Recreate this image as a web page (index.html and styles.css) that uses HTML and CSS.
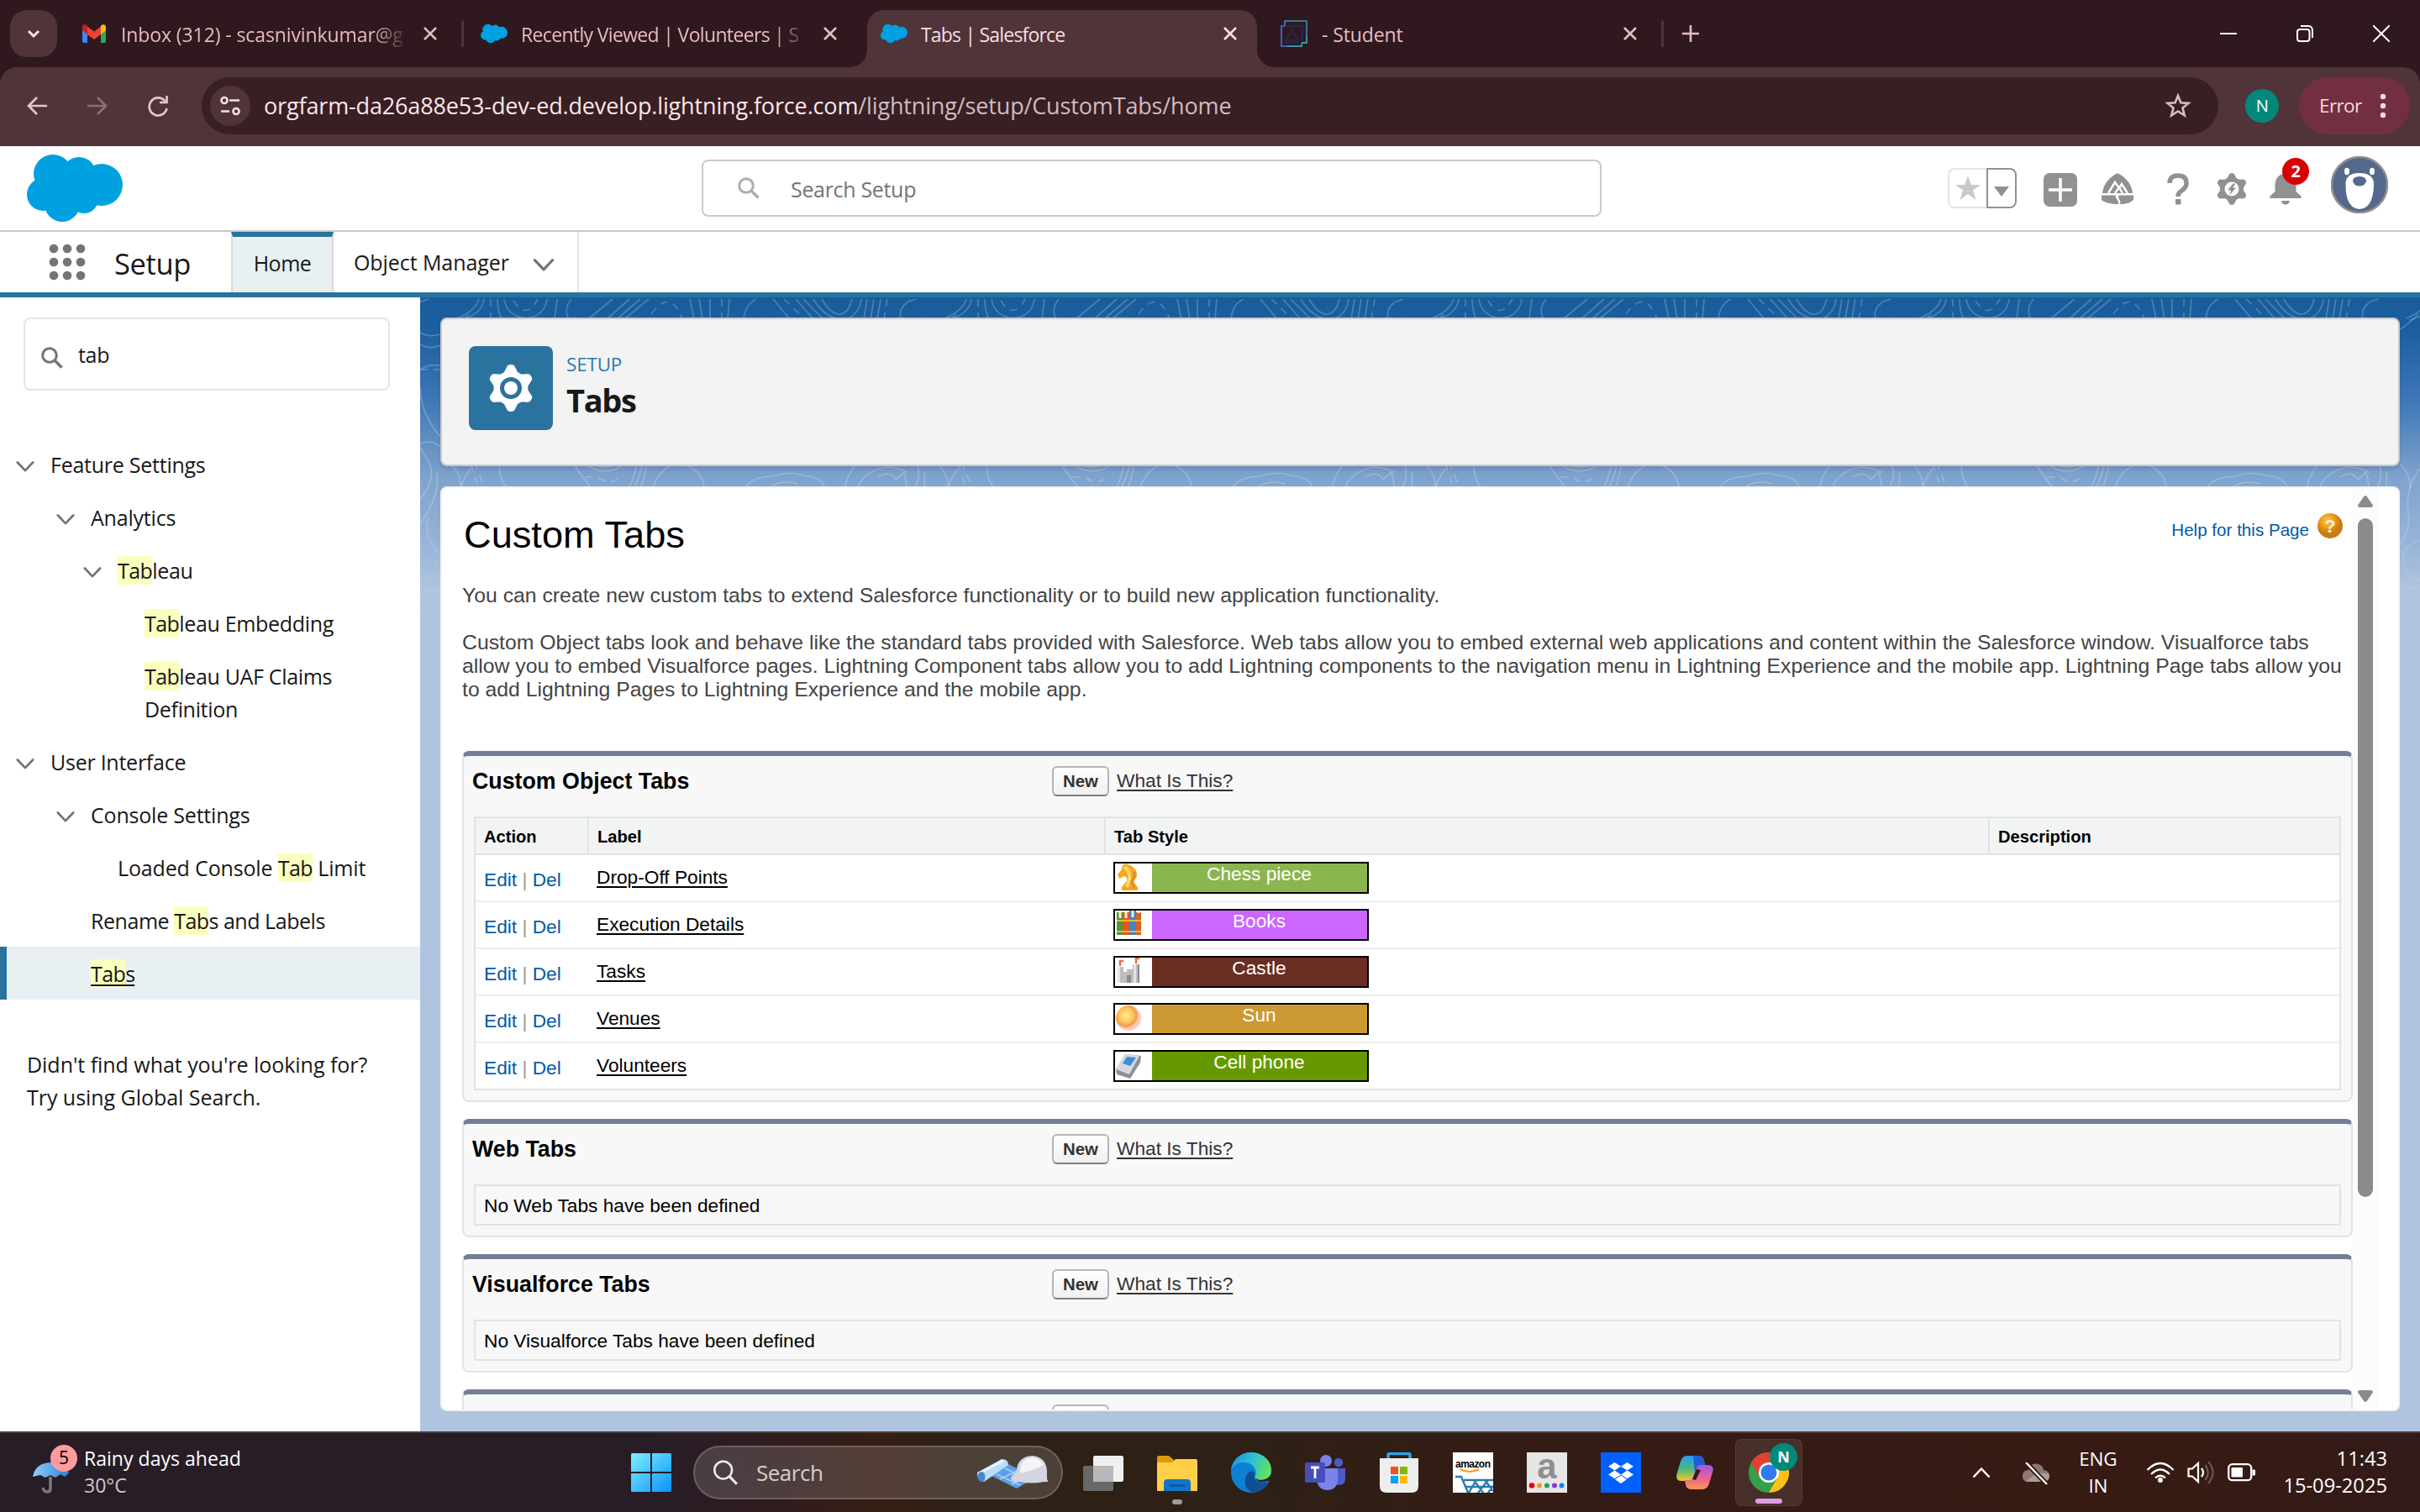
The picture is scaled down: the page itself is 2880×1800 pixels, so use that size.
FILE: index.html
```html
<!DOCTYPE html>
<html lang="en">
<head>
<meta charset="utf-8">
<title>Tabs | Salesforce</title>
<link rel="stylesheet" href="styles.css">
</head>
<body>
<svg class="defs" aria-hidden="true">
  <symbol id="cloud" viewBox="0 0 114 80">
    <g fill="#00a1e0"><ellipse cx="31" cy="23" rx="23" ry="23"/><circle cx="62" cy="23" r="20"/><circle cx="89" cy="36" r="25"/><circle cx="19.500" cy="47.500" r="19.500"/><circle cx="42" cy="59" r="21"/><circle cx="68" cy="53" r="17"/><rect x="25" y="22" width="60" height="32"/></g>
  </symbol>
  <symbol id="x" viewBox="0 0 16 16"><path d="M1 1 15 15M15 1 1 15" fill="none" stroke="currentColor" stroke-width="2.600"/></symbol>
  <symbol id="chev" viewBox="0 0 24 16"><path d="M2 2.500 12 13 22 2.500" fill="none" stroke="currentColor" stroke-width="3" stroke-linecap="round" stroke-linejoin="round"/></symbol>
  <symbol id="lens" viewBox="0 0 26 26"><circle cx="10" cy="10" r="8.300" fill="none" stroke="currentColor" stroke-width="3"/><path d="M16 16 24.500 24.500" stroke="currentColor" stroke-width="3.500"/></symbol>
  <symbol id="gear" viewBox="-28 -28 56 56">
    <g fill="currentColor"><circle r="20.500"/>
      <path d="M-9 -17 L-5 -25 Q-4 -28 0 -28 Q4 -28 5 -25 L9 -17 L9 17 L5 25 Q4 28 0 28 Q-4 28 -5 25 L-9 17Z"/>
      <path transform="rotate(60)" d="M-9 -17 L-5 -25 Q-4 -28 0 -28 Q4 -28 5 -25 L9 -17 L9 17 L5 25 Q4 28 0 28 Q-4 28 -5 25 L-9 17Z"/>
      <path transform="rotate(120)" d="M-9 -17 L-5 -25 Q-4 -28 0 -28 Q4 -28 5 -25 L9 -17 L9 17 L5 25 Q4 28 0 28 Q-4 28 -5 25 L-9 17Z"/>
    </g>
  </symbol>
</svg>

<header class="strip">
  <button class="tab-search"><svg width="18" height="12"><path d="M3 3 9 9 15 3" fill="none" stroke="#fbe4e6" stroke-width="3"/></svg></button>
  <div class="tab">
    <svg class="fav" viewBox="0 0 32 32"><path d="M2 8V25q0 2 2 2h4V13z" fill="#4285f4"/><path d="M30 8V25q0 2-2 2h-4V13z" fill="#34a853"/><path d="M24 6.500 26 5.500q4-1 4 3.500v3l-6 5z" fill="#fbbc04"/><path d="M8 17V7.500l8 6 8-6V17l-8 6z" fill="#ea4335"/><path d="M2 12V9q0-4.500 4-3.500L8 7v10z" fill="#c5221f"/></svg>
    <span class="tab-title fade">Inbox (312) - scasnivinkumar@g</span>
    <svg class="close"><use href="#x"/></svg><i class="sep"></i>
  </div>
  <div class="tab">
    <svg class="fav"><use href="#cloud"/></svg>
    <span class="tab-title fade tighter">Recently Viewed | Volunteers | S</span>
    <svg class="close"><use href="#x"/></svg>
  </div>
  <div class="tab active">
    <svg class="fav"><use href="#cloud"/></svg>
    <span class="tab-title tightest">Tabs | Salesforce</span>
    <svg class="close"><use href="#x"/></svg>
  </div>
  <div class="tab">
    <svg class="fav" viewBox="0 0 32 32" fill="none" stroke-width="2"><path d="M5 7V1H31V27H27" stroke="#3f7391"/><path d="M5 7H26V25" stroke="#1f2f66" stroke-width="1.500"/><path d="M5 7H1V31H25V27H31" stroke="#3c63b4"/><path d="M8 31H25V27H31V20" stroke="#3b9199"/><path d="M6 24 14 12l7 12z" stroke="#2b2545"/><rect x="5" y="25" width="20" height="3" fill="#1d2650" stroke="none"/></svg>
    <span class="tab-title student">- Student</span>
    <svg class="close"><use href="#x"/></svg><i class="sep"></i>
  </div>
  <svg class="plus" width="22" height="22"><path d="M11 1V21M1 11H21" stroke="#e6bcc3" stroke-width="2.600"/></svg>
  <div class="win-controls">
    <svg width="20" height="20"><path d="M0 10H20" stroke="#fff" stroke-width="2"/></svg>
    <svg width="20" height="20" fill="none" stroke="#fff" stroke-width="2"><rect x="1" y="5" width="14.500" height="14" rx="3"/><path d="M5 1H14Q19 1 19 7V15"/></svg>
    <svg width="20" height="20"><path d="M0 0 20 20M20 0 0 20" stroke="#fff" stroke-width="2"/></svg>
  </div>
</header>

<div class="toolbar-back"><div class="toolbar">
  <svg class="nav-back" width="24" height="24"><path d="M24 12H2M12 2 2 12 12 22" fill="none" stroke="#eac3c9" stroke-width="2.700"/></svg>
  <svg class="nav-fwd" width="24" height="24"><path d="M0 12H22M12 2 22 12 12 22" fill="none" stroke="#8f6d73" stroke-width="2.700"/></svg>
  <svg class="nav-reload" width="26" height="26"><path d="M21.500 7.500A10.500 10.500 0 1 0 23.500 16M23.500 1V9H15" fill="none" stroke="#eac3c9" stroke-width="2.700"/></svg>
  <div class="omnibox">
    <span class="site-info"><svg width="28" height="28" fill="none" stroke="#f3dfe1" stroke-width="2.600"><circle cx="7" cy="7.500" r="3.500"/><path d="M13 7.500H25M3 20.500H13"/><circle cx="21" cy="20.500" r="3.500"/></svg></span>
    <span class="url">orgfarm-da26a88e53-dev-ed.develop.lightning.force.com<span>/lightning/setup/CustomTabs/home</span></span>
    <svg class="bookmark" width="32" height="32" viewBox="0 0 32 32"><path d="M16 4 19.400 12.300 28.500 12.900 21.500 18.600 23.800 27.400 16 22.500 8.200 27.400 10.500 18.600 3.500 12.900 12.600 12.300Z" fill="none" stroke="#d3bfc2" stroke-width="2.600"/></svg>
  </div>
  <span class="profile">N</span>
  <div class="error-pill"><span>Error</span><svg width="8" height="30" fill="#ffd9df"><circle cx="4" cy="4" r="3.200"/><circle cx="4" cy="15" r="3.200"/><circle cx="4" cy="26" r="3.200"/></svg></div>
</div></div>

<div class="app-header">
  <svg class="logo"><use href="#cloud"/></svg>
  <div class="global-search"><svg width="26" height="26"><use href="#lens"/></svg><span>Search Setup</span></div>
  <div class="actions">
    <div class="fav-group">
      <span class="fav-star"><svg width="32" height="32" viewBox="0 0 32 32"><path d="M16 1 19.800 12H31L22 18.500 25.500 30 16 23 6.500 30 10 18.500 1 12H12.200Z" fill="#c9c9c9"/></svg></span>
      <span class="fav-drop"><svg width="18" height="12"><path d="M0 0H18L9 12Z" fill="#919191"/></svg></span>
    </div>
    <svg class="a-plus" width="40" height="40"><rect width="40" height="40" rx="7" fill="#919191"/><path d="M20 6V34M6 20H34" stroke="#fff" stroke-width="3.500"/></svg>
    <svg class="a-trail" width="38" height="38" viewBox="0 0 38 38"><path d="M19 0C27 4 36 12 37 24H1C2 12 11 4 19 0Z" fill="#919191"/><path d="M8 24 16 11 21 18 24 13 31 24M16 24l5-7 4 7" fill="none" stroke="#fff" stroke-width="2.400"/><path d="M0 26.500H17C15 30 21 31 20 37 12 37 3 35 0 32ZM21 26.500H38V32C35 35 29 37 22 37 24 32 18 30 21 26.500Z" fill="#919191"/></svg>
    <svg class="a-help" width="26" height="38" viewBox="0 0 26 38"><path d="M3 12Q3 3 13 3T23 12Q23 17 18 20.500 13 23.500 13 28" fill="none" stroke="#919191" stroke-width="5.500"/><rect x="10" y="31" width="6.500" height="6.500" rx="1" fill="#919191"/></svg>
    <svg class="a-gear" width="38" height="38" viewBox="-19 -19 38 38"><use href="#gear" x="-19" y="-19" width="38" height="38"/><circle r="8.500" fill="#fff"/><path d="M2 -7 -5 1.500H-1L-2.500 7 5 -1.500H1L4 -6Z" fill="#919191"/></svg>
    <div class="bell"><svg width="38" height="38" viewBox="0 0 38 38"><path d="M19 0Q31 2 31.500 14V22L37 27Q39 30 36 30H2Q-1 30 1 27L6.500 22V14Q7 2 19 0ZM14 33H24Q23 37.500 19 37.500T14 33Z" fill="#919191"/></svg><span class="badge">2</span></div>
    <svg class="avatar" width="68" height="68" viewBox="0 0 68 68"><circle cx="34" cy="34" r="33" fill="#54698d" stroke="#8e8e8e" stroke-width="2.500"/><ellipse cx="19" cy="18" rx="3" ry="4.200" fill="#fff"/><ellipse cx="49" cy="18" rx="3" ry="4.200" fill="#fff"/><path d="M34 20Q50 20 51 32 51 62 34 63 17 62 17.500 32 18 20 34 20Z" fill="#fff"/><path d="M34 24Q42 24 42 30 40 35.500 34 35.500T26 30Q26 24 34 24Z" fill="#54698d"/></svg>
  </div>
</div>

<nav class="app-nav">
  <svg class="waffle" width="44" height="44" fill="#747474"><circle cx="6" cy="6" r="5.300"/><circle cx="22" cy="6" r="5.300"/><circle cx="38" cy="6" r="5.300"/><circle cx="6" cy="22" r="5.300"/><circle cx="22" cy="22" r="5.300"/><circle cx="38" cy="22" r="5.300"/><circle cx="6" cy="38" r="5.300"/><circle cx="22" cy="38" r="5.300"/><circle cx="38" cy="38" r="5.300"/></svg>
  <span class="app-name">Setup</span>
  <a class="nav-tab current">Home</a>
  <a class="nav-tab manager">Object Manager<svg width="26" height="17"><use href="#chev"/></svg></a>
</nav>

<div class="workspace">
  <aside class="sidebar">
    <div class="quick-find"><svg width="26" height="26"><use href="#lens"/></svg><span>tab</span></div>
    <ul class="tree">
      <li class="l1"><svg class="caret"><use href="#chev"/></svg><span>Feature Settings</span></li>
      <li class="l2"><svg class="caret"><use href="#chev"/></svg><span>Analytics</span></li>
      <li class="l3"><svg class="caret"><use href="#chev"/></svg><span><mark>Tab</mark>leau</span></li>
      <li class="l4"><span><mark>Tab</mark>leau Embedding</span></li>
      <li class="l4"><span><mark>Tab</mark>leau UAF Claims<br>Definition</span></li>
      <li class="l1"><svg class="caret"><use href="#chev"/></svg><span>User Interface</span></li>
      <li class="l2"><svg class="caret"><use href="#chev"/></svg><span>Console Settings</span></li>
      <li class="l3 leaf"><span class="wide">Loaded Console <mark>Tab</mark> Limit</span></li>
      <li class="l2 leaf"><span class="rename">Rename <mark>Tab</mark>s and Labels</span></li>
      <li class="l2 leaf selected"><span><mark>Tab</mark>s</span></li>
    </ul>
    <p class="hint">Didn't find what you're looking for?<br>Try using Global Search.</p>
  </aside>

  <main class="main">
    <svg class="topo" width="2380" height="400">
      <defs><pattern id="contours" width="580" height="400" patternUnits="userSpaceOnUse">
        <g fill="none" stroke="#fff" stroke-opacity=".22" stroke-width="1.700">
          <path d="M76 2Q74 20 48 27M70 2Q66 16 44 25M92 2Q92 16 97 26M100 2C104 32 148 32 151 2M163 2 160 26M180 2Q170 14 177 26M229 2 200 26M249 2 222 26M262 2 234 26M272 2 243 26M321 2 326 26M332 2 336 26M345 2V26M400 2Q387 8 385 26M368 2 366 26M420 2 440 26M447 2 468 26M456 2 480 26M468 2C485 32 520 36 525 2M478 2C492 26 508 26 514 2M532 2 528 26M540 2 536 26M548 2 544 26M590 2Q568 8 572 26M10 2Q0 6-8 6M580 26Q590 15 600 12"/>
          <path stroke-dasharray="9 7" d="M84 2V26M111 4Q126 28 140 2M275 20Q298-12 312 26M359 2V26M433 2 458 26M556 2 552 26"/>
          <path d="M0 42Q10 48 24 44T58 20M0 56Q14 64 30 54M0 86Q12 78 30 82M0 106Q0 142 30 172M0 174Q14 168 30 182M0 240Q22 214 8 192T0 168M0 270Q24 236 20 208M10 262Q2 290 30 310M0 340Q12 328 30 334M0 356Q14 344 30 350M0 378Q10 358 30 366"/>
          <path d="M94 198Q94 218 104 228M182 198 204 228M248 228Q256 212 258 196M254 228Q262 212 265 196M262 228Q268 212 270 196M276 228Q290 190 322 202 338 212 338 228M196 198Q220 216 244 198M205 198Q220 206 235 198M386 228Q392 214 420 213 440 206 456 212 480 214 482 228M414 228Q428 216 450 222M505 228Q508 210 520 198M520 228Q528 206 556 202 588 204 594 228M544 214Q560 205 566 217L576 208 580 228M36 198Q50 212 48 228"/>
          <path stroke-dasharray="9 7" d="M60 198 70 228M196 214H212Q226 226 240 212M0 86H30M0 318Q16 310 30 322M64 196Q72 214 78 230"/>
          <path d="M60 204Q42 228 46 256T28 300M62 290Q40 292 40 312T60 336M64 344Q46 350 34 340M64 372Q48 374 34 368M64 386Q48 388 34 384"/>
        </g>
      </pattern></defs>
      <rect width="2380" height="400" fill="url(#contours)"/>
    </svg>

    <section class="page-head">
      <span class="page-icon"><svg width="56" height="56" viewBox="-28 -28 56 56"><use href="#gear" x="-28" y="-28" width="56" height="56"/><circle r="13" fill="#2a739e"/><circle r="8" fill="#fff"/></svg></span>
      <div><p class="eyebrow">SETUP</p><h1>Tabs</h1></div>
    </section>

    <section class="frame">
      <div class="content">
        <div class="title-row">
          <h2>Custom Tabs</h2>
          <a class="help">Help for this Page <svg width="30" height="30" viewBox="0 0 30 30"><defs><radialGradient id="amber" cx=".4" cy=".3"><stop offset="0" stop-color="#fbc861"/><stop offset=".6" stop-color="#ee9a10"/><stop offset="1" stop-color="#c97d13"/></radialGradient></defs><circle cx="15" cy="15" r="15" fill="url(#amber)"/><text x="15" y="23" text-anchor="middle">?</text></svg></a>
        </div>
        <p class="intro">You can create new custom tabs to extend Salesforce functionality or to build new application functionality.</p>
        <p class="detail">Custom Object tabs look and behave like the standard tabs provided with Salesforce. Web tabs allow you to embed external web applications and content within the Salesforce window. Visualforce tabs<br>allow you to embed Visualforce pages. Lightning Component tabs allow you to add Lightning components to the navigation menu in Lightning Experience and the mobile app. Lightning Page tabs allow you<br>to add Lightning Pages to Lightning Experience and the mobile app.</p>

        <div class="block">
          <div class="block-head"><h3>Custom Object Tabs</h3><button class="new">New</button><a>What Is This?</a></div>
          <div class="table">
            <div class="tr th"><span>Action</span><span>Label</span><span>Tab Style</span><span>Description</span></div>
            <div class="tr"><span class="act"><a>Edit</a> | <a>Del</a></span><span><a class="name">Drop-Off Points</a></span><span><span class="style chess"><svg width="32" height="34"><path d="M9 2Q12-1 15 1L20 3Q27 8 26 15L22 22 27 28V32H8V28L13 22Q16 17 11 15L5 18 3 13 8 7Z" fill="#f6a821"/><path d="M11 4Q18 8 17 18L14 28" stroke="#fcd867" stroke-width="4" fill="none"/><path d="M23 10Q24 16 20 22L23 30" stroke="#e8872a" stroke-width="3" fill="none"/></svg><b>Chess piece</b></span></span><span></span></div>
            <div class="tr"><span class="act"><a>Edit</a> | <a>Del</a></span><span><a class="name">Execution Details</a></span><span><span class="style books"><svg width="32" height="34"><path d="M2 2H9V29H2z" fill="#4a9a35"/><path d="M9 2H17V29H9z" fill="#e2581c"/><path d="M17 0H25V29H17z" fill="#3f83cf"/><path d="M25 2H31V29H25z" fill="#d9621f"/><path d="M2 12H31M2 25H31" stroke="#f3b53a" stroke-width="1.800"/><path d="M13 0V9M21 0V8M6 0V9M28 0V3" stroke="#f7efe2" stroke-width="3"/></svg><b>Books</b></span></span><span></span></div>
            <div class="tr"><span class="act"><a>Edit</a> | <a>Del</a></span><span><a class="name">Tasks</a></span><span><span class="style castle"><svg width="32" height="34"><path d="M3 11H10V17H14V14H21V8H28V30H3z" fill="#bdbdbd"/><path d="M3 11H6V30H3zM22 8H25V30H22z" fill="#e4e4e4"/><path d="M14 21H19V30H14zM27 8H29V30H27z" fill="#8b8b8b"/><path d="M6 10V4H10M25 7V1H29" stroke="#ee6a4a" stroke-width="2.500" fill="none"/></svg><b>Castle</b></span></span><span></span></div>
            <div class="tr"><span class="act"><a>Edit</a> | <a>Del</a></span><span><a class="name">Venues</a></span><span><span class="style sun"><svg width="32" height="34"><defs><radialGradient id="sun" cx=".4" cy=".4"><stop offset="0" stop-color="#ffee8e"/><stop offset=".55" stop-color="#fbc55c"/><stop offset=".85" stop-color="#f39a52"/><stop offset="1" stop-color="#f9cdb5"/></radialGradient></defs><circle cx="16" cy="16" r="15" fill="url(#sun)"/></svg><b>Sun</b></span></span><span></span></div>
            <div class="tr"><span class="act"><a>Edit</a> | <a>Del</a></span><span><a class="name">Volunteers</a></span><span><span class="style phone"><svg width="32" height="34"><path d="M12 3 31 5 30 13 18 32 2 27 1 21Z" fill="#8b8f96"/><path d="M12 3 29 5 17 27 1 21Z" fill="#d6d9de"/><path d="M14 6 25 7 18 17 9 14Z" fill="#3c8ddc"/></svg><b>Cell phone</b></span></span><span></span></div>
          </div>
        </div>
        <div class="block">
          <div class="block-head"><h3>Web Tabs</h3><button class="new">New</button><a>What Is This?</a></div>
          <div class="empty">No Web Tabs have been defined</div>
        </div>
        <div class="block">
          <div class="block-head"><h3>Visualforce Tabs</h3><button class="new">New</button><a>What Is This?</a></div>
          <div class="empty">No Visualforce Tabs have been defined</div>
        </div>
        <div class="block">
          <div class="block-head"><h3></h3><button class="new">&nbsp;</button></div>
        </div>
      </div>
      <div class="scrollbar">
        <svg width="18" height="14"><path d="M9 0Q10.500 0 11.500 2L18 11.500Q18 14 16 14H2Q0 14 0 11.500L6.500 2Q7.500 0 9 0Z" fill="#8b8b8b"/></svg>
        <span class="thumb"></span>
        <svg class="down" width="18" height="14"><path d="M9 14Q10.500 14 11.500 12L18 2.500Q18 0 16 0H2Q0 0 0 2.500L6.500 12Q7.500 14 9 14Z" fill="#8b8b8b"/></svg>
      </div>
    </section>
  </main>
</div>

<footer class="taskbar">
  <div class="weather">
    <div class="umbrella"><svg width="56" height="58" viewBox="0 0 56 58"><defs><linearGradient id="umb" x1="0" x2="1"><stop offset="0" stop-color="#8ed0fb"/><stop offset="1" stop-color="#2f7fd6"/></linearGradient></defs><path d="M22 38V52Q22 56 18 56T13 51" fill="none" stroke="#7b7b7b" stroke-width="3.500"/><path d="M1 38Q4 22 22 21 40 22 44 34L39 38 34 35 28 39 22 36 16 39 10 36Z" fill="url(#umb)"/></svg><span class="count">5</span></div>
    <div class="weather-text"><span>Rainy days ahead</span><span class="dim">30°C</span></div>
  </div>
  <svg class="start" width="48" height="46"><defs><linearGradient id="win" x1="0" y1="0" x2="1" y2="1"><stop offset="0" stop-color="#7df0ff"/><stop offset="1" stop-color="#0a92fb"/></linearGradient></defs><path d="M0 1.500Q0 0 1.500 0H23V22H0ZM25 0H46.500Q48 0 48 1.500V22H25ZM0 24H23V46H1.500Q0 46 0 44.500ZM25 24H48V44.500Q48 46 46.500 46H25Z" fill="url(#win)"/></svg>
  <div class="task-search">
    <svg width="30" height="30" viewBox="0 0 26 26"><circle cx="11" cy="10.500" r="9" fill="none" stroke="#eee" stroke-width="2.200"/><path d="M17.500 17 25 25" stroke="#eee" stroke-width="2.600"/></svg><span>Search</span>
    <svg class="doodle" width="86" height="40" viewBox="0 0 86 40" preserveAspectRatio="none"><path d="M14 22 34 8 70 26 48 39Z" fill="#5c9ee8"/><path d="M24 22 52 35M34 15 62 28M28 28 52 16M42 34 62 22" stroke="#a9cff6" stroke-width="1.500"/><path d="M1 20 30 4Q38 4 38 11L9 31Q0 30 1 20Z" fill="#b9dcf8"/><path d="M3 21 32 6" stroke="#e8f5fe" stroke-width="3"/><ellipse cx="6" cy="25" rx="4.500" ry="6" fill="#4a86c9"/><path d="M41 27Q44 20 48 19 48 1 67 0 84 2 84 20V28Q88 32 80 31 66 34 52 31 42 32 41 27Z" fill="#d4d5e0"/><path d="M52 19Q52 3 67 2 76 3 80 11 70 17 52 21Z" fill="#f3f3f8"/></svg>
  </div>
  <div class="apps">
    <span><svg viewBox="0 0 48 48"><rect x="0" y="16" width="36" height="30" rx="2" fill="#686868"/><rect x="12" y="4" width="36" height="31" rx="2" fill="#f0f0f0"/><rect x="12" y="16" width="24" height="19" fill="#b9b9b9"/></svg></span>
    <span class="running"><svg viewBox="0 0 48 48"><path d="M0 6Q0 4 2 4H14L20 9V14H0Z" fill="#dd9a05"/><path d="M0 12H18L22 8H46Q48 8 48 10V46H0Z" fill="#ffcf48"/><path d="M8 46V36Q8 32 13 32H35Q40 32 40 36V46Z" fill="#1174c6"/><path d="M15 39.500H33" stroke="#0a4f91" stroke-width="2"/></svg></span>
    <span><svg viewBox="0 0 48 48"><defs><linearGradient id="edge" x1="0" y1=".2" x2="1" y2=".5"><stop offset="0" stop-color="#1b93dd"/><stop offset=".5" stop-color="#2cc0d6"/><stop offset="1" stop-color="#62e45c"/></linearGradient></defs><circle cx="24" cy="24" r="24" fill="#0f7fd4"/><path d="M0 22C1 8 12 0 24 0 38 0 48 10 48 21 48 29 42 33 35 33 29 33 27 31 29 28 31 25 30 13 16 12 8 12 2 16 0 22Z" fill="url(#edge)"/><path d="M28 29C28 36 38 37 45 35 40 44 32 49 24 47 14 42 15 28 22 23 26 21 29 24 28 29Z" fill="#124e97"/><path d="M29 28C28 36 40 36 43 34L48 34V26Q44 33 35 33 28 32 29 28Z" fill="#2f2116"/></svg></span>
    <span><svg viewBox="0 0 48 48"><circle cx="25" cy="10" r="7" fill="#7b83eb"/><circle cx="40" cy="12" r="5.200" fill="#5059c9"/><path d="M34 19H48V31Q48 39 40 39 34 39 34 33Z" fill="#5059c9"/><path d="M14 19H39V33Q38 45 26 45 15 44 14 33Z" fill="#7b83eb"/><rect x="0" y="12" width="24" height="24" rx="2" fill="#464eb8"/><path d="M7 18H17M12 18V31" stroke="#fff" stroke-width="2.800"/></svg></span>
    <span><svg viewBox="0 0 48 48"><path d="M11 11V3Q11 1.500 13 1.500H35Q37 1.500 37 3V11" fill="none" stroke="#28a8ea" stroke-width="3.500"/><path d="M1 7H47V40Q47 48 39 48H9Q1 48 1 40Z" fill="#eee"/><path d="M14 17H23V26H14z" fill="#f25022"/><path d="M25 17H34V26H25z" fill="#7fba00"/><path d="M14 28H23V37H14z" fill="#00a4ef"/><path d="M25 28H34V37H25z" fill="#ffb900"/></svg></span>
    <span><svg viewBox="0 0 48 48"><rect width="48" height="48" fill="#fff"/><text class="amz" x="24" y="18" text-anchor="middle" textLength="42">amazon</text><path d="M9 20Q20 26 31 20" fill="none" stroke="#f90" stroke-width="2"/><path d="M3 29H10L18 48M13 33H48M16 41H48M19 48 28 33M25 33 36 48M30 48 42 33M38 33 48 46M42 48 48 40" fill="none" stroke="#2a7bb0" stroke-width="2.400"/></svg></span>
    <span><svg viewBox="0 0 48 48"><rect width="48" height="48" fill="#e6e6e6"/><text class="big-a" x="24" y="31" text-anchor="middle">a</text><circle cx="6" cy="39.500" r="3.300" fill="#e2001a"/><circle cx="15" cy="39.500" r="3" fill="#f39a1e"/><circle cx="24" cy="39.500" r="3" fill="#1fa84f"/><circle cx="33" cy="39.500" r="3" fill="#8b33d6"/><circle cx="41.500" cy="39.500" r="3" fill="#1583e0"/></svg></span>
    <span><svg viewBox="0 0 48 48"><rect width="48" height="48" fill="#0061fe"/><path d="M16.500 12 24 16.800 16.500 21.600 9 16.800ZM31.500 12 39 16.800 31.500 21.600 24 16.800ZM16.500 21.600 24 26.400 16.500 31.200 9 26.400ZM31.500 21.600 39 26.400 31.500 31.200 24 26.400ZM24 27.500 31 32.300 24 37 17 32.300Z" fill="#fff"/></svg></span>
    <span><svg viewBox="0 0 48 48"><defs><linearGradient id="cpa" x1="0" y1="0" x2="0" y2="1"><stop offset="0" stop-color="#2a9bf0"/><stop offset=".5" stop-color="#45b883"/><stop offset="1" stop-color="#f3c821"/></linearGradient><linearGradient id="cpb" x1="0" y1="0" x2="0" y2="1"><stop offset="0" stop-color="#a056e8"/><stop offset=".55" stop-color="#ee5f93"/><stop offset="1" stop-color="#fb9c4c"/></linearGradient></defs><path d="M28 4Q34 4 35 10L36 15H30Q27 15 26 19L22 34H8Q0 34 3 24L7 11Q9 4 15 4Z" fill="url(#cpa)"/><path d="M20 44Q14 44 13 38L12 33H17Q21 33 22 29L26 15H39Q48 15 45 24L41 37Q39 44 33 44Z" fill="url(#cpb)"/><path d="M22 4H28Q34 4 35 10L36 15H30Q27 15 26 19L24 24Z" fill="#1f5fd0"/><path d="M26 20 31 21 25 33 21 32Z" fill="#351b15"/></svg></span>
    <span class="focused"><svg viewBox="0 0 48 48"><circle cx="24" cy="24" r="24" fill="#34a047"/><path d="M24 24 3.200 12A24 24 0 0 1 44.800 12Z" fill="#e3402f"/><path d="M24 12H44.800A24 24 0 0 1 24 48L34.400 30Z" fill="#fbc116"/><path d="M3.200 12 13.600 30 24 12Z" fill="#e3402f"/><circle cx="24" cy="24" r="12" fill="#fff"/><circle cx="24" cy="24" r="9.500" fill="#3079ee"/></svg><em>N</em></span>
  </div>
  <div class="tray">
    <svg width="22" height="14"><path d="M1.500 12.500 11 2.500 20.500 12.500" fill="none" stroke="#fff" stroke-width="2.500"/></svg>
    <svg class="t-cloud" width="34" height="28"><path d="M7 23Q0 22 1 15 2 9 8 9 10 1 17 1.500 25 2 26 9 33 10 33 16 33 23 26 23Z" fill="#8d7772"/><path d="M5 22 20 12 33 14Q33 23 26 23H7Z" fill="#ab9d9a"/><path d="M5 0 30 26" stroke="#371b14" stroke-width="6"/><path d="M5 0 30 26" stroke="#fff" stroke-width="2.300"/></svg>
    <div class="lang"><span>ENG</span><span>IN</span></div>
    <svg class="t-wifi" width="34" height="26" fill="none" stroke="#fff" stroke-width="2.300"><path d="M1.500 10Q17-6 32.500 10M6 15Q17 4 28 15M11 19.500Q17 14 23 19.500"/><circle cx="17" cy="22" r="1.800" fill="#fff"/></svg>
    <svg class="t-sound" width="34" height="28" fill="none" stroke="#fff" stroke-width="2.200"><path d="M1.500 9.500H6L13 3V25L6 18.500H1.500ZM17 9Q21 14 17 19"/><path d="M21.500 5Q28 14 21.500 23M25 1Q36 14 25 27" stroke="#6e544e"/></svg>
    <svg class="t-batt" width="34" height="22"><rect x="1.200" y="1.200" width="27" height="19" rx="4.500" fill="none" stroke="#fff" stroke-width="2.300"/><rect x="4.500" y="5" width="13.500" height="11.500" rx="1" fill="#fff"/><path d="M30 8H32.500V14H30Z" fill="#fff" stroke="#fff"/></svg>
    <div class="clock"><span>11:43</span><span>15-09-2025</span></div>
  </div>
</footer>
</body>
</html>
```
FILE: styles.css
```css
* { box-sizing: border-box; }
body, h1, h2, h3, p, ul { margin: 0; padding: 0; }
body {
  width: 2880px; height: 1800px; overflow: hidden;
  display: flex; flex-direction: column;
  font-family: "Open Sans", "Noto Sans", sans-serif;
  font-size: 25px; letter-spacing: -.32px; color: #181818; background: #fff;
}
svg { display: block; flex: none; }
button { font: inherit; border: 0; padding: 0; }
.defs { position: absolute; width: 0; height: 0; }

/* browser tab strip */
.strip { height: 80px; flex: none; background: #2f191e; display: flex; align-items: center; color: #e6bcc3; font-size: 23px; letter-spacing: -.1px; }
.tab-search { width: 56px; height: 56px; margin: 0 12px; border-radius: 20px; background: #503439; display: grid; place-items: center; }
.tab { width: 476px; height: 80px; display: flex; align-items: center; padding-left: 16px; position: relative; flex: none; }
.fav { width: 32px; height: 32px; margin-right: 16px; }
.tab-title { width: 339px; overflow: hidden; white-space: nowrap; line-height: 36px; padding-top: 2px; }
.fade { -webkit-mask-image: linear-gradient(90deg, #000 300px, transparent 342px); mask-image: linear-gradient(90deg, #000 300px, transparent 342px); }
.tighter { letter-spacing: -.66px; }
.tightest { letter-spacing: -.8px; }
.student { padding-left: 1px; }
.close { width: 16px; height: 16px; margin-left: 21px; }
.sep { width: 3px; height: 32px; margin-left: 29px; border-radius: 2px; background: #503439; }
.active { width: 464px; height: 68px; margin: 12px 12px 0 0; padding-bottom: 12px; background: #503439; border-radius: 20px 20px 0 0; color: #f7dfe1; }
.active::before, .active::after { content: ""; position: absolute; bottom: 0; width: 20px; height: 20px; }
.active::before { left: -20px; background: radial-gradient(circle at 0 0, transparent 19.500px, #503439 20px); }
.active::after { right: -20px; background: radial-gradient(circle at 100% 0, transparent 19.500px, #503439 20px); }
.plus { margin-left: 17px; }
.win-controls { margin-left: auto; margin-right: 36px; display: flex; gap: 71px; }

/* browser toolbar */
.toolbar-back { flex: none; background: #2f191e; }
.toolbar { height: 94px; border-bottom: 2px solid #4a3a3e; background: #503439; border-radius: 20px 20px 0 0; display: flex; align-items: center; padding: 0 12px 0 32px; }
.nav-fwd { margin-left: 48px; }
.nav-reload { margin: 0 40px 0 47px; }
.omnibox { width: 2400px; height: 68px; margin-left: -1px; border-radius: 34px; background: #381f24; display: flex; align-items: center; padding: 0 32px 0 10px; }
.site-info { width: 48px; height: 48px; border-radius: 50%; background: #503439; display: grid; place-items: center; margin-right: 16px; }
.url { flex: 1; font-size: 27px; letter-spacing: -.15px; color: #fbe7e9; white-space: nowrap; padding-bottom: 1px; }
.url span { color: #cfbcbf; }
.profile { width: 40px; height: 40px; margin: 0 24px 0 32px; border-radius: 50%; background: #00897b; color: #fff; font-size: 20px; line-height: 40px; text-align: center; }
.error-pill { width: 132px; height: 68px; border-radius: 34px; background: #722f40; color: #ffd9df; display: flex; align-items: center; justify-content: space-between; padding: 0 28px 1px 24px; font-size: 22.500px; letter-spacing: -.6px; }

/* application header */
.app-header { height: 102px; flex: none; border-bottom: 2px solid #c9c9c9; display: flex; padding-left: 32px; }
.logo { width: 114px; height: 80px; margin-top: 10px; }
.global-search { width: 1071px; height: 68px; margin: 16px 0 0 689px; border: 2px solid #c9c9c9; border-radius: 8px; display: flex; align-items: center; padding-left: 41px; gap: 37px; color: #747474; }
.global-search svg { color: #aeaeae; }
.global-search span { padding-top: 1px; }
.actions { display: flex; margin: 12px 0 0 412px; align-items: flex-start; }
.fav-group { display: flex; width: 82px; height: 48px; margin-top: 14px; }
.fav-group span { border: 2px solid #e5e5e5; display: grid; place-items: center; }
.fav-group .fav-star { width: 46px; border-right: 0; border-radius: 8px 0 0 8px; }
.fav-group .fav-drop { width: 36px; border-color: #919191; border-radius: 0 8px 8px 0; padding-top: 8px; }
.a-plus { margin: 20px 0 0 32px; }
.a-trail { margin: 20px 0 0 29px; }
.a-help { margin: 20px 0 0 40px; }
.a-gear { margin: 20px 0 0 32px; color: #919191; }
.bell { position: relative; margin: 20px 0 0 26px; }
.badge { position: absolute; left: 15px; top: -18px; width: 32px; height: 32px; border-radius: 50%; background: #d80000; color: #fff; font-weight: 700; font-size: 20px; line-height: 32px; text-align: center; }
.avatar { margin-left: 35px; }

.app-nav { height: 78px; flex: none; border-bottom: 6px solid #2a739e; display: flex; align-items: stretch; }
.waffle { margin: 14px 0 0 58px; }
.app-name { width: 142px; margin-left: 34px; font-size: 34.500px; line-height: 76px; letter-spacing: -.4px; }
.nav-tab { line-height: 74px; }
.current { width: 122px; margin-left: -3px; background: #e8f0f3; border: 1px solid #dddbda; border-width: 0 2px; border-top: 6px solid #2a739e; line-height: 63px; text-align: center; letter-spacing: -.5px; }
.manager { width: 292px; padding-left: 24px; border-right: 2px solid #e5e5e5; display: flex; align-items: center; gap: 28px; letter-spacing: -.08px; }
.manager svg { margin-top: 7px; color: #747474; }

.workspace { flex: 1; min-height: 0; display: flex; }

/* setup tree */
.sidebar { width: 500px; flex: none; padding-top: 24px; }
.quick-find { width: 436px; height: 87px; margin-left: 28px; border: 2px solid #e5e5e5; border-radius: 8px; display: flex; align-items: center; gap: 18px; padding-left: 19px; }
.quick-find svg { color: #747474; margin-top: 8px; }
.quick-find span { padding-top: 1px; }
.tree { list-style: none; margin-top: 56px; }
.tree li { display: flex; padding: 13px 0 11px; line-height: 39px; }
.caret { width: 22px; height: 15px; margin: 14px 19px 0 1px; color: #747474; }
.tree .l1 { padding-left: 18px; letter-spacing: -.25px; }
.tree .l2 { padding-left: 66px; letter-spacing: -.2px; }
.tree .l3 { padding-left: 98px; }
.tree .l4 { padding-left: 172px; }
.tree .l2.leaf { padding-left: 108px; }
.tree .l3.leaf { padding-left: 140px; }
mark { background: #faffbd; color: inherit; letter-spacing: -.6px; }
.wide { letter-spacing: -.15px; }
.rename { letter-spacing: -.45px; }
.tree .selected { letter-spacing: -.9px; background: #e8f0f3; box-shadow: inset 8px 0 #2a739e; text-decoration: underline; text-decoration-thickness: 2px; text-underline-offset: 3px; }
.hint { margin: 58px 0 0 32px; line-height: 39px; letter-spacing: -.04px; }

/* main area */
.main { flex: 1; position: relative; display: flex; flex-direction: column; gap: 24px; padding: 24px; background: linear-gradient(#195c9b 0, #1c5fa0 40px, #3d76b6 120px, #7fa3cd 215px, #94b2d6 285px, #b0c4df 350px); }
.topo { position: absolute; left: 0; top: 0; -webkit-mask-image: linear-gradient(#000 60%, transparent); mask-image: linear-gradient(#000 60%, transparent); }
.page-head { position: relative; height: 177px; flex: none; border: 2px solid #c9c9c9; border-radius: 8px; background: #f3f3f3; box-shadow: 0 4px 4px rgba(0, 0, 0, .1); display: flex; gap: 16px; padding: 32px; }
.page-icon { width: 100px; height: 100px; border-radius: 8px; background: #2a739e; color: #fff; display: grid; place-items: center; }
.eyebrow { margin-top: 7px; font-size: 22.500px; line-height: 30px; letter-spacing: -.2px; color: #2a7ab0; }
h1 { font-size: 38px; line-height: 50px; margin-top: 2px; letter-spacing: -1.300px; }

.frame { position: relative; flex: 1; min-height: 0; overflow: hidden; border: 2px solid #f3f3f3; border-radius: 8px; background: #fff; display: flex; font-family: "Liberation Sans", Arial, sans-serif; letter-spacing: 0; }
.content { width: 2250px; margin-left: 24px; padding-top: 30px; flex: none; }
.title-row { display: flex; justify-content: space-between; height: 52px; padding: 0 12px 0 2px; }
h2 { font-size: 45.200px; line-height: 52px; font-weight: 400; color: #000; }
.help { display: flex; align-items: flex-start; gap: 10px; font-size: 20.600px; line-height: 40px; color: #015ba7; }
.help text { font-size: 22px; font-weight: 700; fill: #fff3d6; }
.intro, .detail { font-size: 24.770px; line-height: 28px; color: #444; white-space: nowrap; }
.intro { margin-top: 32px; }
.detail { margin: 28px 0 59px; }
.block { margin-bottom: 20px; border: 2px solid #dfe3e6; border-top: 6px solid #747e96; border-radius: 8px; background: #f8f8f8; padding: 0 12px; padding-bottom: 12px; color: #000; font-size: 22.690px; }
.block-head { display: flex; align-items: center; height: 60px; margin-bottom: 12px; margin-left: -2px; }
h3 { width: 690px; font-size: 26.780px; }
.new { width: 68px; height: 36px; border: 2px solid #b5b5b5; border-bottom-color: #7f7f7f; border-radius: 6px; background: linear-gradient(#fff, #f0f0f0); color: #333; font-weight: 700; font-size: 20.400px; letter-spacing: 0; margin-right: 9px; }
.block-head a { margin-top: -2px; color: #333; text-decoration: underline; text-decoration-thickness: 2px; text-underline-offset: 3px; }
.table { border: 2px solid #dfe3e6; border-bottom: 0; background: #fff; }
.tr { display: grid; grid-template-columns: 133px 615px 1052px 1fr; height: 56px; border-bottom: 2px solid #ececec; line-height: 53px; }
.tr:last-child { border-color: #dfe3e6; }
.tr > span { padding-left: 11px; }
.tr > .act { color: #999; padding: 3px 0 0 10px; }
.th { height: 44px; background: #f2f4f4; border-color: #dfe3e6; font-size: 20.150px; font-weight: 700; line-height: 44px; }
.th > span:first-child { padding-left: 10px; }
.th > span + span { border-left: 2px solid #dfe3e6; padding-left: 10px; }
.act a { color: #015ba7; }
.name { text-decoration: underline; text-decoration-thickness: 2px; text-underline-offset: 3px; }
.style { width: 304px; height: 38px; margin-top: 8px; border: 2px solid #000; display: flex; }
.style svg { width: 44px; background: #fff; }
.style b { flex: 1; font-weight: 400; line-height: 25px; color: #fff; text-align: center; padding-right: 1px; }
.chess b { background: #8bb64f; }
.books b { background: #cc66ff; }
.castle b { background: #6b2e23; }
.sun b { background: #cc9933; }
.phone b { background: #669900; }
.empty { height: 49px; border: 2px solid #dfe3e6; line-height: 46px; padding-left: 10px; }
.scrollbar { width: 30px; background: #fcfcfc; display: flex; flex-direction: column; align-items: center; padding: 9px 0; }
.thumb { width: 18px; height: 808px; margin-top: 13px; border-radius: 9px; background: #8b8b8b; }
.down { margin-top: auto; }

/* taskbar */
.taskbar { height: 96px; flex: none; border-top: 2px solid #4b4241; background: linear-gradient(90deg, #281d27 0, #281d27 780px, #301c1d 930px, #361e13 1050px, #2d2015 1150px, #2e2015 1500px, #351b15 1900px, #371b13 2600px, #331a19 2880px); display: flex; align-items: center; color: #fff; letter-spacing: 0; }
.weather { display: flex; width: 751px; padding-left: 38px; }
.umbrella { position: relative; width: 62px; height: 64px; margin-top: -3px; }
.count { position: absolute; left: 22px; top: 0; width: 32px; height: 32px; border-radius: 50%; background: #ff9b9f; color: #000; font-size: 21px; line-height: 31px; text-align: center; }
.weather-text { display: flex; flex-direction: column; font-size: 23px; line-height: 32px; margin-top: -3px; letter-spacing: .03px; }
.dim { color: #cdc8cb; }
.start { margin-right: 26px; }
.task-search { width: 440px; height: 64px; border: 2px solid rgba(255, 255, 255, .18); border-radius: 32px; background: rgba(255, 255, 255, .15); display: flex; align-items: center; padding-left: 21px; }
.task-search span { margin: 0 auto 0 22px; font-size: 26px; letter-spacing: -.5px; color: #d6cdcd; }
.doodle { margin-right: 15px; }
.apps { display: flex; gap: 8px; margin-left: 8px; }
.apps span { position: relative; width: 80px; height: 80px; display: grid; place-items: center; border-radius: 8px; }
.apps svg { width: 48px; height: 48px; }
.running::after, .focused::after { content: ""; position: absolute; left: 34px; bottom: 2px; width: 12px; height: 6px; border-radius: 3px; background: #a09a95; }
.focused { background: rgba(255, 255, 255, .09); border: 1px solid rgba(255, 255, 255, .07); }
.focused::after { left: 23px; width: 32px; background: #dc9de3; }
.focused em { position: absolute; right: 5px; top: 4px; width: 33px; height: 33px; border-radius: 50%; background: #00897b; font: 700 18px/33px "Open Sans", sans-serif; text-align: center; }
.amz { font: 700 12px "Liberation Sans", sans-serif; }
.big-a { font: 700 42px "Liberation Sans", sans-serif; fill: #8f8f8f; }
.tray { margin-left: auto; display: flex; align-items: center; padding-right: 39px; font-size: 22.500px; line-height: 32px; }
.t-cloud { margin: 3px 0 0 37px; }
.lang { margin: -1px 0 0 34px; display: flex; flex-direction: column; align-items: center; letter-spacing: -.2px; }
.t-wifi { margin-left: 35px; }
.t-sound { margin-left: 15px; }
.t-batt { margin-left: 14px; }
.clock { margin: -2px 0 0 32px; display: flex; flex-direction: column; align-items: flex-end; font-size: 23.700px; letter-spacing: 0; }
```
